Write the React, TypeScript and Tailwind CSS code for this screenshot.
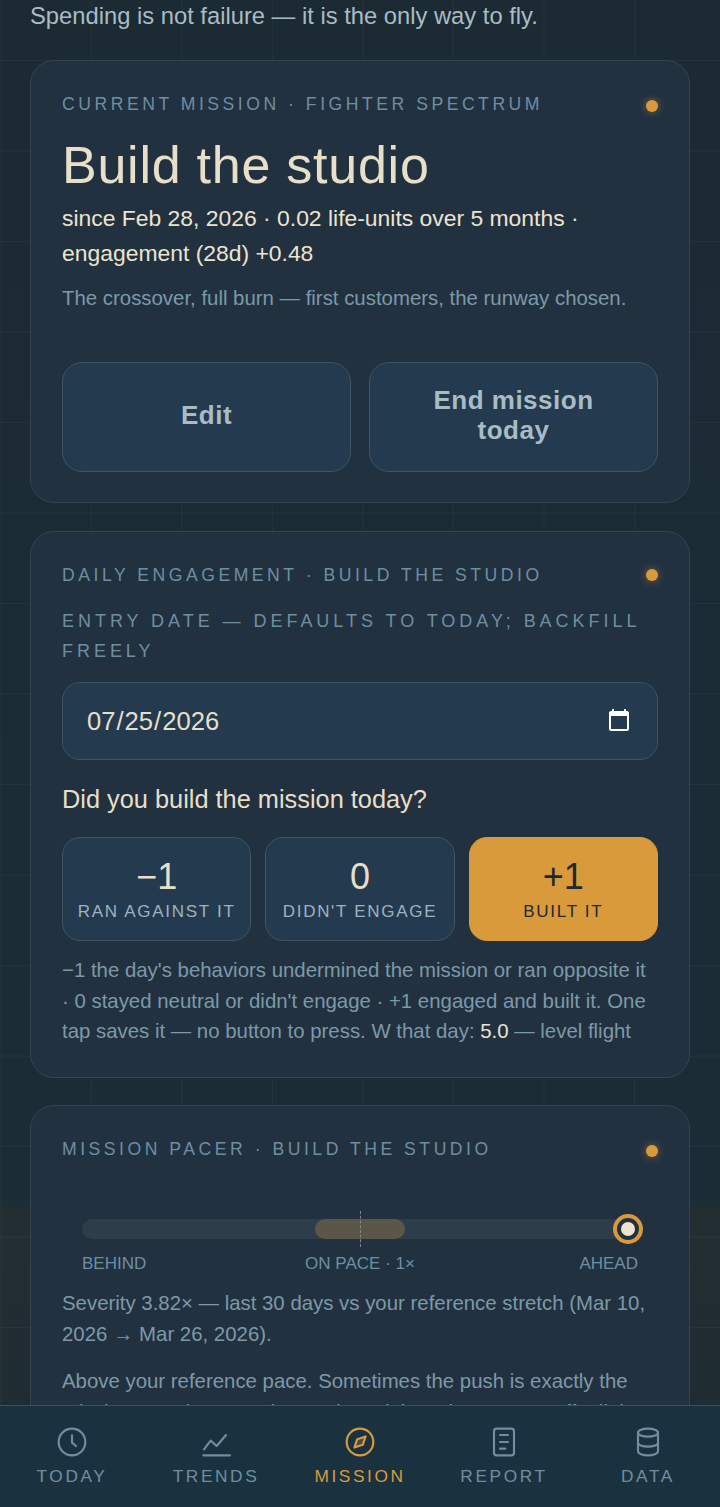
import type { ReactNode } from "react";

const sans = "font-['Liberation_Sans',Arial,sans-serif]";

function Eyebrow({ children, dotClass }: { children: ReactNode; dotClass: string }) {
    return (
        <div className="flex items-start justify-between">
            <div className="text-[17.6px] leading-[27px] tracking-[3.52px] text-[#6f8ea0] uppercase">{children}</div>
            <span className={`h-3 w-3 rounded-full bg-[#d99a3c] shadow-[0_0_8px_rgba(217,154,60,0.55)] ${dotClass}`} />
        </div>
    );
}

function Card({ children, className }: { children: ReactNode; className?: string }) {
    return (
        <section className={`mx-[30px] rounded-[24px] border border-[#34454f] bg-[#213140] px-[31px] ${className ?? ""}`}>
            {children}
        </section>
    );
}

function Choice({ value, label, active }: { value: string; label: string; active?: boolean }) {
    return (
        <button
            className={
                active
                    ? "flex h-[104px] flex-1 flex-col items-center rounded-[18px] border border-[#d99a3c] bg-[#d99a3c] pt-[15px] text-[#1b2a33]"
                    : "flex h-[104px] flex-1 flex-col items-center rounded-[18px] border border-[#3f5562] bg-[#243a4f] pt-[15px] text-[#e8dfc8]"
            }
        >
            <span className="text-[36px] leading-[48px]">{value}</span>
            <span className={`mt-[-0.5px] text-[17px] leading-[24px] tracking-[1.7px] ${active ? "text-[#1b2a33]" : "text-[#9db3bf]"}`}>
                {label}
            </span>
        </button>
    );
}

function NavItem({ label, active, children }: { label: string; active?: boolean; children: ReactNode }) {
    return (
        <div className={`flex w-[144px] flex-col items-center ${active ? "text-[#d99a3c]" : "text-[#6f8ea0]"}`}>
            <svg
                width="32"
                height="32"
                viewBox="0 0 24 24"
                fill="none"
                stroke="currentColor"
                strokeWidth="1.6"
                strokeLinecap="round"
                strokeLinejoin="round"
            >
                {children}
            </svg>
            <span className="mt-[4px] text-[17.3px] leading-[28px] tracking-[2.6px]">{label}</span>
        </div>
    );
}

export default function App() {
    return (
        <div className={`relative flex h-[1507px] flex-col overflow-hidden bg-[#1b2a33] ${sans}`}>
            <main className="h-[1405px] overflow-hidden bg-[linear-gradient(#1b2a33_0,#1c2c37_1197px,#232e31_1212px,#1f2c33_1405px)]">
                <div className="min-h-full bg-[linear-gradient(to_right,rgba(255,255,255,0.035)_1px,transparent_1px),linear-gradient(to_bottom,rgba(255,255,255,0.035)_1px,transparent_1px)] bg-[size:90.5px_90.5px] bg-[position:0.5px_60px]">
                    <p className="px-[30px] text-[23.76px] leading-[32px] text-[#a9bcc6]">
                        Spending is not failure — it is the only way to fly.
                    </p>

                    <Card className="mt-[28px] h-[443.4px] pt-[30px]">
                        <Eyebrow dotClass="mt-[9px]">Current mission · Fighter Spectrum</Eyebrow>
                        <h1 className="mt-[15px] text-[52px] leading-[64px] tracking-[0.75px] text-[#e8dfc8]">Build the studio</h1>
                        <p className="mt-[4px] text-[22.9px] leading-[35px] text-[#ece4cf]">
                            since Feb 28, 2026 · 0.02 life-units over 5 months · engagement (28d) +0.48
                        </p>
                        <p className="mt-[12px] text-[20.4px] leading-[30.6px] text-[#7d99a8]">
                            The crossover, full burn — first customers, the runway chosen.
                        </p>
                        <div className="mt-[48px] grid grid-cols-2 gap-[18px]">
                            <button className="h-[110px] rounded-[20px] border border-[#3f5562] bg-[#243a4f] pb-[4px] text-[26px] leading-[30px] font-bold tracking-[0.5px] text-[#a9bcc6]">
                                Edit
                            </button>
                            <button className="h-[110px] rounded-[20px] border border-[#3f5562] bg-[#243a4f] px-[40px] pb-[4px] text-[26px] leading-[30px] font-bold tracking-[0.5px] text-[#a9bcc6]">
                                End mission today
                            </button>
                        </div>
                    </Card>

                    <Card className="mt-[27.6px] h-[547px] pt-[30px]">
                        <Eyebrow dotClass="mt-[7px]">Daily engagement · Build the studio</Eyebrow>
                        <div className="mt-[17px] text-[18px] leading-[30px] tracking-[3.96px] text-[#6f8ea0] uppercase">
                            Entry date — defaults to today; backfill freely
                        </div>
                        <input
                            type="date"
                            defaultValue="2026-07-25"
                            className="mt-[16px] h-[78px] w-full rounded-[18px] border border-[#3f5562] bg-[#243a4f] px-[23px] text-[25.6px] text-[#e8dfc8] [color-scheme:dark]"
                        />
                        <p className="mt-[20px] text-[25.35px] leading-[38px] text-[#e8dfc8]">Did you build the mission today?</p>
                        <div className="mt-[19px] flex gap-[14px]">
                            <Choice value="−1" label="RAN AGAINST IT" />
                            <Choice value="0" label="DIDN'T ENGAGE" />
                            <Choice value="+1" label="BUILT IT" active />
                        </div>
                        <p className="mt-[14px] text-[20.4px] leading-[30.6px] text-[#7d99a8]">
                            −1 the day's behaviors undermined the mission or ran opposite it · 0 stayed neutral or didn't engage ·
                            +1 engaged and built it. One tap saves it — no button to press. W that day:{" "}
                            <span className="text-[#ece4cf]">5.0</span> — level flight
                        </p>
                    </Card>

                    <Card className="mt-[27px] pt-[30px] pb-[40px]">
                        <Eyebrow dotClass="mt-[9px]">Mission pacer · Build the studio</Eyebrow>
                        <div className="relative mx-[20px] mt-[56px] h-[20px] rounded-full bg-[#2d3d49]">
                            <div className="absolute left-[233px] h-[20px] w-[90px] rounded-full bg-[#5a5748]" />
                            <div className="absolute top-[-8px] left-[278px] h-[36px] border-l border-dashed border-[#7d8a8c]" />
                            <div className="absolute top-[-5px] right-[-5px] flex h-[30px] w-[30px] items-center justify-center rounded-full border-[4px] border-[#d99a3c] bg-[#213140]">
                                <div className="h-[14px] w-[14px] rounded-full bg-[#ece4cf]" />
                            </div>
                        </div>
                        <div className="mx-[20px] mt-[13px] grid grid-cols-3 text-[17px] leading-[24px] text-[#6f8ea0]">
                            <span>BEHIND</span>
                            <span className="text-center whitespace-nowrap">ON PACE · 1×</span>
                            <span className="text-right">AHEAD</span>
                        </div>
                        <p className="mt-[12px] text-[20.4px] leading-[30.6px] text-[#7d99a8]">
                            Severity 3.82× — last 30 days vs your reference stretch (Mar 10, 2026 → Mar 26, 2026).
                        </p>
                        <p className="mt-[17px] text-[20.4px] leading-[30.6px] text-[#7d99a8]">
                            Above your reference pace. Sometimes the push is exactly the mission you chose, and sometimes it is a sign to ease off a little.
                        </p>
                    </Card>
                </div>
            </main>

            <nav className="z-10 flex h-[102px] border-t border-[#3a515e] bg-[#1a3240] pt-[20px]">
                <NavItem label="TODAY">
                    <circle cx="12" cy="12" r="10" />
                    <path d="M12 7v5.500l3 2.500" />
                </NavItem>
                <NavItem label="TRENDS">
                    <path d="M3 17.500l5-6.500 4.500 4 7-8.250" />
                    <path d="M2.500 22h20" />
                </NavItem>
                <NavItem label="MISSION" active>
                    <circle cx="12" cy="12" r="10" />
                    <path d="M16.200 7.800l-2.100 6.300-6.300 2.100 2.100-6.300z" fill="currentColor" fillOpacity="0.25" />
                </NavItem>
                <NavItem label="REPORT">
                    <rect x="4.500" y="2" width="15" height="20" rx="2" />
                    <path d="M9 6.750h6M9 12h6M9 17h4" />
                </NavItem>
                <NavItem label="DATA">
                    <ellipse cx="12" cy="5" rx="7.500" ry="3" />
                    <path d="M4.500 5v14c0 1.660 3.360 3 7.500 3s7.500-1.340 7.500-3V5" />
                    <path d="M4.500 12.500c0 1.660 3.360 3 7.500 3s7.500-1.340 7.500-3" />
                </NavItem>
            </nav>
        </div>
    );
}
